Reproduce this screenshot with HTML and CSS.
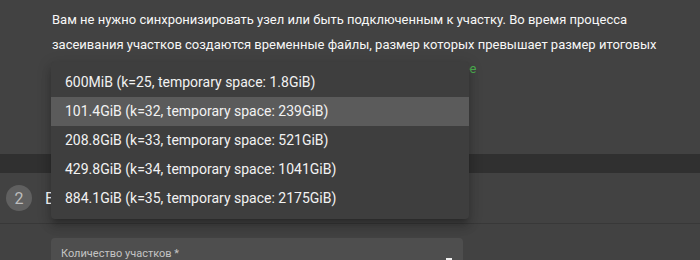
FILE: index.html
```html
<!DOCTYPE html>
<html lang="ru">
<head>
    <meta charset="UTF-8">
    <meta name="viewport" content="width=device-width, initial-scale=1.0">
    <title>Засеивание участков</title>
    <link rel="stylesheet" href="styles.css">
</head>
<body>
    <!-- Шаг 1: описание -->
    <div class="step-card top-card">
        <p class="intro">
            Вам не нужно синхронизировать узел или быть подключенным к участку. Во время процесса
            засеивания участков создаются временные файлы, размер которых превышает размер итоговых
            файлов участков в несколько раз, учтите это при выборе. <a href="#" class="more">Подробнее</a>
        </p>
    </div>

    <div class="gap-band"></div>

    <!-- Шаг 2 -->
    <div class="step-card">
        <div class="step-header">
            <span class="step-num">2</span>
            <span class="step-title">Выберите размер участков</span>
        </div>
        <div class="step-body">
            <div class="field">
                <label class="field-label">Количество участков *</label>
                <span class="field-mark"></span>
            </div>
        </div>
    </div>

    <!-- Выпадающий список размеров -->
    <ul class="size-menu">
        <li>600MiB (k=25, temporary space: 1.8GiB)</li>
        <li class="active">101.4GiB (k=32, temporary space: 239GiB)</li>
        <li>208.8GiB (k=33, temporary space: 521GiB)</li>
        <li>429.8GiB (k=34, temporary space: 1041GiB)</li>
        <li>884.1GiB (k=35, temporary space: 2175GiB)</li>
    </ul>
</body>
</html>
```

FILE: styles.css
```css
body {
    margin: 0;
    background-color: #303030;
    font-family: 'Roboto', 'Noto Sans', sans-serif;
    color: #fff;
    height: 260px;
    overflow: hidden;
}

.step-card {
    background-color: #424242;
}

.top-card {
    height: 154px;
    box-sizing: border-box;
    padding: 8px 0 0 52px;
}

.intro {
    margin: 0;
    width: 620px;
    font-size: 13px;
    line-height: 24.5px;
    color: #f7f7f7;
}

.intro .more {
    color: #4caf50;
    text-decoration: none;
}

.gap-band {
    height: 19px;
}

/* Заголовок шага */
.step-header {
    display: flex;
    align-items: center;
    height: 50px;
    padding-left: 6px;
    border-bottom: 1px solid #383838;
}

.step-num {
    width: 26px;
    height: 26px;
    border-radius: 50%;
    background-color: #606060;
    color: #bdbdbd;
    font-size: 16px;
    display: flex;
    align-items: center;
    justify-content: center;
}

.step-title {
    margin-left: 13px;
    font-size: 16px;
    color: #fff;
}

.step-body {
    padding: 14px 0 0 51px;
}

.field {
    position: relative;
    width: 412px;
    height: 22px;
    background-color: #4e4e4e;
    border-radius: 4px 4px 0 0;
    box-sizing: border-box;
    padding: 7px 0 0 10px;
    line-height: 13px;
}

.field-label {
    font-size: 11px;
    color: #c4c4c4;
}

.field-mark {
    position: absolute;
    left: 395px;
    top: 20px;
    width: 6px;
    height: 2px;
    background-color: #f0f0f0;
}

/* Меню */
.size-menu {
    position: absolute;
    left: 51px;
    top: 62px;
    width: 418px;
    margin: 0;
    padding: 6px 0;
    list-style: none;
    background-color: #3e3e3e;
    border-radius: 4px;
    box-shadow: 0 5px 5px -3px rgba(0, 0, 0, 0.2), 0 8px 10px 1px rgba(0, 0, 0, 0.14), 0 3px 14px 2px rgba(0, 0, 0, 0.12);
}

.size-menu li {
    height: 29px;
    line-height: 29px;
    padding-left: 14px;
    font-size: 14px;
    color: #f2f2f2;
}

.size-menu li.active {
    background-color: #5b5b5b;
}
```
